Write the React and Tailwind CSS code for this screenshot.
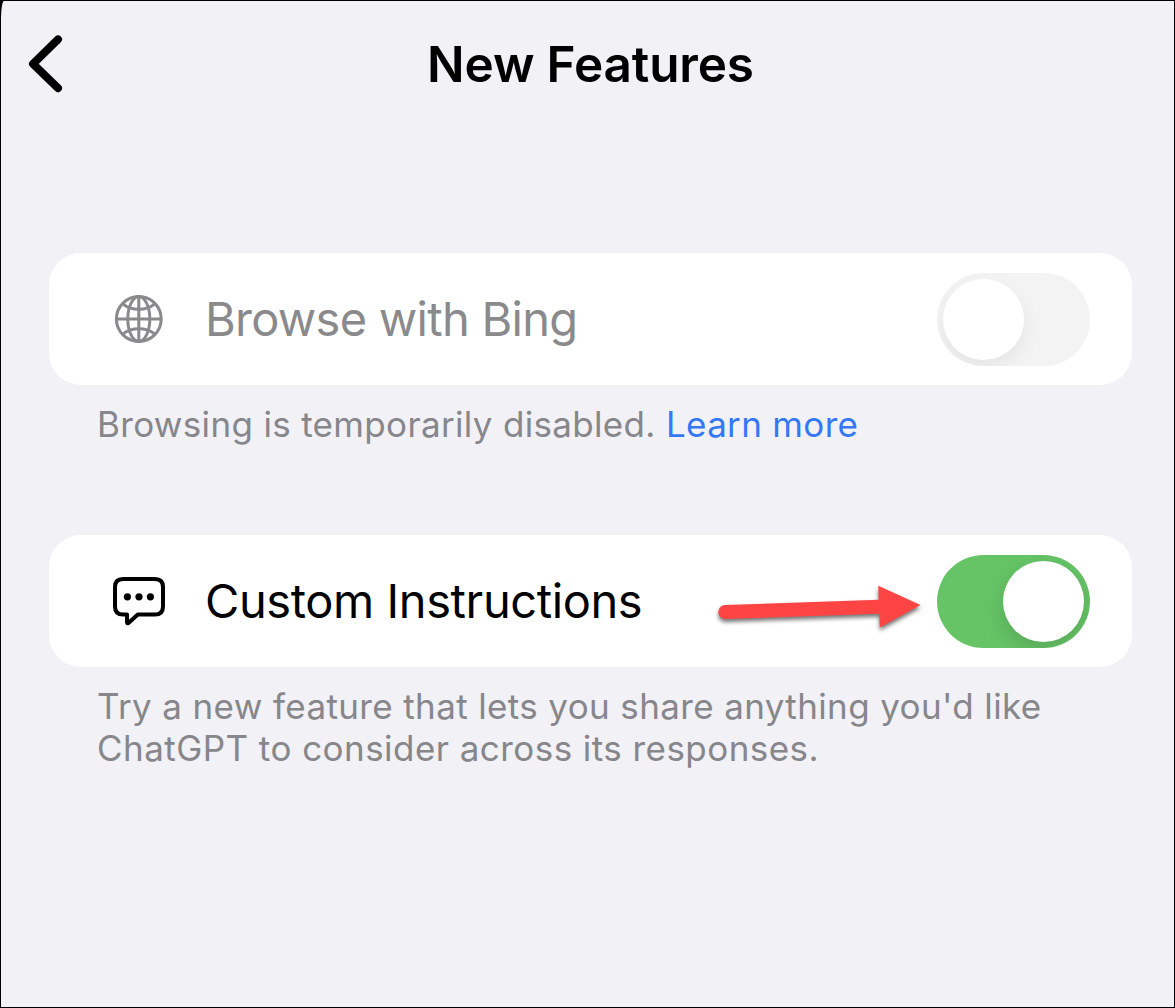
import React from 'react';

const BackIcon = () => (
    <svg className="w-10 h-16" viewBox="0 0 40 64" fill="none" stroke="black" strokeWidth="8" strokeLinecap="round" strokeLinejoin="round">
        <path d="M33 7.4 8 31.8 33 56.2" />
    </svg>
);

const GlobeIcon = () => (
    <svg className="w-[52px] h-[52px] shrink-0" viewBox="0 0 52 52" fill="none" stroke="currentColor" strokeWidth="3">
        <circle cx="25.8" cy="26" r="22.4" />
        <ellipse cx="25.8" cy="26" rx="11" ry="22.4" />
        <path d="M25.8 3.3v45.4M3.1 26h45.4" />
        <path d="M9.8 10.8c8.5 7.2 23.5 7.2 32 0M9.8 41.2c8.5-7.2 23.5-7.2 32 0" />
    </svg>
);

const BubbleIcon = () => (
    <svg className="w-[52px] h-[52px] shrink-0" viewBox="0 0 52 52" fill="none">
        <path
            d="M10 4H42Q50 4 50 12V31.5Q50 39.6 42 39.6H24.8L15.5 48Q14 49 14 47V39.6H10Q2 39.6 2 31.5V12Q2 4 10 4Z"
            stroke="currentColor"
            strokeWidth="4"
            strokeLinejoin="round"
        />
        <g fill="currentColor">
            <circle cx="14.4" cy="21.8" r="3.6" />
            <circle cx="26" cy="21.8" r="3.6" />
            <circle cx="37.4" cy="21.8" r="3.6" />
        </g>
    </svg>
);

const Toggle = ({ on }) => (
    <div
        role="switch"
        aria-checked={on}
        className={`w-[153px] h-[93px] shrink-0 rounded-full p-1.5 flex overflow-hidden ${on ? 'bg-[#66c466] justify-end' : 'bg-[#f3f3f3] justify-start'}`}
    >
        <div className={`w-[81px] h-[81px] rounded-full bg-white ${on ? 'shadow-[0_8px_22px_rgba(0,0,0,0.14)]' : 'shadow-[0_8px_20px_rgba(0,0,0,0.06)]'}`}></div>
    </div>
);

const Arrow = () => (
    <svg className="absolute left-[660px] top-[40px] w-[220px] h-[68px] overflow-visible" viewBox="0 0 220 68">
        <path
            d="M16 30 169.6 24.7 169.3 10.7 211.5 30 170.8 52.4 170.3 38.7 16.5 44A7 7 0 0 1 16 30Z"
            fill="#ff4444"
            className="drop-shadow-[0_3px_2px_rgba(0,0,0,0.55)]"
        />
    </svg>
);

const FeatureRow = ({ icon: Icon, label, on, labelClass, children }) => (
    <div className="relative h-[132px] bg-white rounded-[32px] flex items-center pl-16 pr-[42px]">
        <div className={`flex flex-1 items-center gap-10 ${labelClass}`}>
            <Icon />
            <span className="text-[47px] leading-[60px] whitespace-nowrap">{label}</span>
        </div>
        <Toggle on={on} />
        {children}
    </div>
);

const App = () => (
    <div className="w-[1175px] h-[1008px] bg-black p-px overflow-hidden font-['Inter',sans-serif]">
        <div className="w-full h-full bg-[#f1f1f6] rounded-tl-[3px_18px] pl-12 pr-[42px]">
            <header className="grid grid-cols-[1fr_auto_1fr] items-center h-[126px]">
                <button className="-ml-6 justify-self-start" aria-label="Back">
                    <BackIcon />
                </button>
                <h1 className="text-[49.5px] leading-[60px] font-semibold tracking-[-0.15px]">New Features</h1>
            </header>
            <main className="pt-[126px]">
                <section>
                    <FeatureRow icon={GlobeIcon} label="Browse with Bing" on={false} labelClass="text-[#8a8a8c] tracking-[-0.72px]" />
                    <p className="pl-12 pt-[18px] text-[35px] leading-[42px] text-[#86868b] whitespace-nowrap tracking-[0.33px]">
                        Browsing is temporarily disabled. <a className="text-[#3478f6]">Learn more</a>
                    </p>
                </section>
                <section className="pt-[90px]">
                    <FeatureRow icon={BubbleIcon} label="Custom Instructions" on labelClass="text-black tracking-[-0.4px]">
                        <Arrow />
                    </FeatureRow>
                    <p className="pl-12 pt-[18px] text-[35px] leading-[42px] text-[#86868b] whitespace-nowrap tracking-[0.37px]">
                        Try a new feature that lets you share anything you'd like
                        <br />
                        <span className="tracking-[0.45px]">ChatGPT to consider across its responses.</span>
                    </p>
                </section>
            </main>
        </div>
    </div>
);

export default App;
